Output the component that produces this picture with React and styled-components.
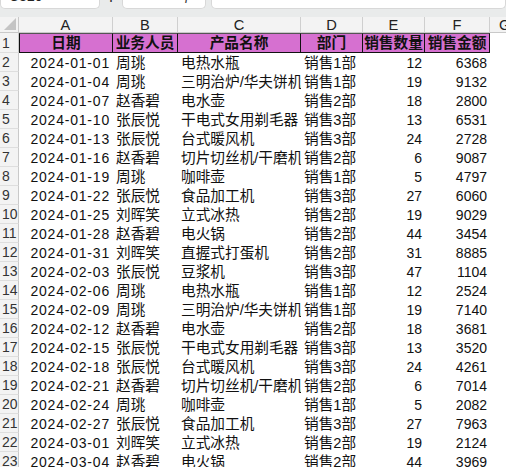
import React from 'react';
import styled, { createGlobalStyle } from 'styled-components';

const GlobalStyle = createGlobalStyle`
  html, body { margin: 0; padding: 0; background: #ffffff; }
  body { font-family: "Liberation Sans", "Noto Sans CJK SC", sans-serif; overflow: hidden; }
`;

const Window = styled.div`
  width: 506px;
  height: 467px;
  overflow: hidden;
  background: #ffffff;
`;

const FormulaBar = styled.div`
  height: 17px;
  background: #e9ebeb;
  display: flex;
  align-items: flex-start;
  overflow: hidden;
`;

const Box = styled.div`
  box-sizing: border-box;
  height: 26px;
  margin-top: -17px;
  padding-top: 3px;
  background: #ffffff;
  border: 1px solid #d8d8d8;
  border-top: none;
  border-radius: 0 0 5px 5px;
  font-size: 14px;
  line-height: 20px;
  color: #222;
  display: flex;
  gap: 12px;
  padding-left: ${p => p.$pad || 8}px;
  width: ${p => (p.$w ? `${p.$w}px` : 'auto')};
  flex: ${p => (p.$grow ? 1 : 'none')};
`;

const Dots = styled.div`
  width: 22px;
  text-align: center;
  margin-top: -12px;
  font-size: 14px;
  line-height: 17px;
  color: #333;
`;

const Gap = styled.div`
  width: 5px;
`;

const Tool = styled.span`
  color: ${p => (p.$dark ? '#333' : '#9a9a9a')};
  font-style: ${p => (p.$italic ? 'italic' : 'normal')};
  font-family: "Liberation Serif", serif;
  margin-left: ${p => (p.$push ? 8 : 0)}px;
`;

const Sheet = styled.div`
  display: grid;
  grid-template-columns: 19px 94px 65px 123px 62px 62px 65px 28px;
  grid-template-rows: 16px 20px;
  grid-auto-rows: 19px;
`;

const Corner = styled.div`
  background: #f3f3f3;
  border-right: 1px solid #c9c9c9;
  border-bottom: 1px solid #c9c9c9;
  box-sizing: border-box;
  display: flex;
  align-items: flex-end;
  justify-content: flex-end;
  padding: 0 2px 2px 0;
`;

const ColHead = styled.div`
  background: #f3f3f3;
  border-right: 1px solid #cfcfcf;
  border-bottom: 1px solid #c9c9c9;
  box-sizing: border-box;
  font-size: 14.67px;
  line-height: 14px;
  color: #222;
  display: flex;
  align-items: flex-end;
  justify-content: ${p => (p.$left ? 'flex-start' : 'center')};
  padding-left: ${p => (p.$left ? '9px' : '0')};
  overflow: hidden;
`;

const RowHead = styled.div`
  background: #f3f3f3;
  border-right: 1px solid #c9c9c9;
  border-bottom: 1px solid #dedede;
  box-sizing: border-box;
  font-size: 14px;
  line-height: 17px;
  color: #333;
  padding-left: 2px;
  display: flex;
  align-items: flex-end;
  overflow: hidden;
`;

const HeadCell = styled.div`
  background: #d670d0;
  border-top: 1px solid #555;
  border-bottom: 1px solid #111;
  border-right: 1px solid #111;
  border-left: ${p => (p.$first ? '1px solid #111' : 'none')};
  box-sizing: border-box;
  font-size: 14.67px;
  font-weight: bold;
  line-height: 18px;
  color: #111;
  display: flex;
  align-items: flex-end;
  justify-content: center;
  white-space: nowrap;
  overflow: hidden;
`;

const Cell = styled.div`
  box-sizing: border-box;
  font-size: ${p => (p.$num ? '14px' : '14.67px')};
  letter-spacing: ${p => (p.$date ? '0.8px' : '0')};
  line-height: 17px;
  padding-top: 1px;
  color: #111;
  white-space: nowrap;
  overflow: hidden;
  display: flex;
  align-items: flex-end;
  justify-content: ${p => (p.$right ? 'flex-end' : 'flex-start')};
  padding-left: ${p => (p.$right ? 0 : 3)}px;
  padding-right: ${p => (p.$right ? 3 : 0)}px;
`;

const Empty = styled.div``;

const letters = ['A', 'B', 'C', 'D', 'E', 'F', 'G'];
const heads = ['日期', '业务人员', '产品名称', '部门', '销售数量', '销售金额'];

const data = [
  ['2024-01-01', '周珧', '电热水瓶', '销售1部', 12, 6368],
  ['2024-01-04', '周珧', '三明治炉/华夫饼机', '销售1部', 19, 9132],
  ['2024-01-07', '赵香碧', '电水壶', '销售2部', 18, 2800],
  ['2024-01-10', '张辰悦', '干电式女用剃毛器', '销售3部', 13, 6531],
  ['2024-01-13', '张辰悦', '台式暖风机', '销售3部', 24, 2728],
  ['2024-01-16', '赵香碧', '切片切丝机/干磨机', '销售2部', 6, 9087],
  ['2024-01-19', '周珧', '咖啡壶', '销售1部', 5, 4797],
  ['2024-01-22', '张辰悦', '食品加工机', '销售3部', 27, 6060],
  ['2024-01-25', '刘晖笑', '立式冰热', '销售2部', 19, 9029],
  ['2024-01-28', '赵香碧', '电火锅', '销售2部', 44, 3454],
  ['2024-01-31', '刘晖笑', '直握式打蛋机', '销售2部', 31, 8885],
  ['2024-02-03', '张辰悦', '豆浆机', '销售3部', 47, 1104],
  ['2024-02-06', '周珧', '电热水瓶', '销售1部', 12, 2524],
  ['2024-02-09', '周珧', '三明治炉/华夫饼机', '销售1部', 19, 7140],
  ['2024-02-12', '赵香碧', '电水壶', '销售2部', 18, 3681],
  ['2024-02-15', '张辰悦', '干电式女用剃毛器', '销售3部', 13, 3520],
  ['2024-02-18', '张辰悦', '台式暖风机', '销售3部', 24, 4261],
  ['2024-02-21', '赵香碧', '切片切丝机/干磨机', '销售2部', 6, 7014],
  ['2024-02-24', '周珧', '咖啡壶', '销售1部', 5, 2082],
  ['2024-02-27', '张辰悦', '食品加工机', '销售3部', 27, 7963],
  ['2024-03-01', '刘晖笑', '立式冰热', '销售2部', 19, 2124],
  ['2024-03-04', '赵香碧', '电火锅', '销售2部', 44, 3969],
];

export default function App() {
  return (
    <Window>
      <GlobalStyle />
      <FormulaBar>
        <Box $w={100}>C320</Box>
        <Dots>⋮</Dots>
        <Box $w={84} $pad={6}>
          <Tool>✕</Tool>
          <Tool>✓</Tool>
          <Tool $dark $italic $push>fx</Tool>
        </Box>
        <Gap />
        <Box $grow />
      </FormulaBar>
      <Sheet>
        <Corner>
          <svg width="12" height="12" viewBox="0 0 12 12">
            <polygon points="12,0 12,12 0,12" fill="#c4c4c4" />
          </svg>
        </Corner>
        {letters.map(l => (
          <ColHead key={l} $left={l === 'G'}>{l}</ColHead>
        ))}
        <RowHead>1</RowHead>
        {heads.map((h, i) => (
          <HeadCell key={h} $first={i === 0}>{h}</HeadCell>
        ))}
        <Empty />
        {data.map((r, i) => (
          <React.Fragment key={i}>
            <RowHead>{i + 2}</RowHead>
            <Cell $right $num $date>{r[0]}</Cell>
            <Cell>{r[1]}</Cell>
            <Cell>{r[2]}</Cell>
            <Cell>{r[3]}</Cell>
            <Cell $right $num>{r[4]}</Cell>
            <Cell $right $num>{r[5]}</Cell>
            <Empty />
          </React.Fragment>
        ))}
      </Sheet>
    </Window>
  );
}
